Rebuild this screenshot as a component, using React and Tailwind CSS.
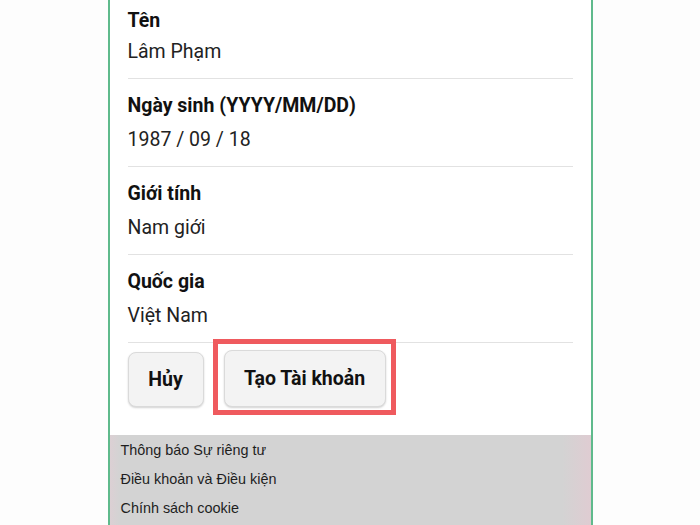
export default function App() {
  const sections = [
    { label: "Ngày sinh (YYYY/MM/DD)", value: "1987 / 09 / 18" },
    { label: "Giới tính", value: "Nam giới" },
    { label: "Quốc gia", value: "Việt Nam" },
  ];
  return (
    <div className="w-[700px] h-[525px] bg-[#fdfdfd] overflow-hidden" style={{ fontFamily: "Roboto, 'Noto Sans', sans-serif" }}>
      <div className="mx-auto w-[485px] h-[525px] border-x-2 border-[#5fba8c] bg-white flex flex-col">
        <div className="px-[18px]">
          <div className="pt-[9px] pb-[14px] border-b border-[#e2e2e2]">
            <div className="text-[19.5px] leading-[24px] font-bold text-[#111]">Tên</div>
            <div className="mt-[7px] text-[19.5px] leading-[24px] text-[#222]">Lâm Phạm</div>
          </div>
          {sections.map((s) => (
            <div key={s.label} className="pt-[15px] pb-[14px] border-b border-[#e2e2e2]">
              <div className="text-[19.5px] leading-[24px] font-bold text-[#111]">{s.label}</div>
              <div className="mt-[10px] text-[19.5px] leading-[24px] text-[#222]">{s.value}</div>
            </div>
          ))}
          <div className="h-[92px] pt-[7px] flex items-start gap-[20px]">
            <button className="mt-[2px] w-[76px] h-[55px] rounded-[8px] bg-[#f3f3f3] border border-[#dadada] shadow-[0_1px_2px_rgba(0,0,0,0.18)] text-[19.5px] font-bold text-[#111]">
              Hủy
            </button>
            <div className="relative">
              <button className="w-[162px] h-[57px] rounded-[8px] bg-[#f3f3f3] border border-[#dadada] shadow-[0_1px_2px_rgba(0,0,0,0.18)] text-[19.5px] font-bold text-[#111]">
                Tạo Tài khoản
              </button>
              <div className="absolute -left-[11px] -top-[11px] -right-[10px] -bottom-[8px] border-[5px] border-[#ef5a5e]"></div>
            </div>
          </div>
        </div>
        <div
          className="flex-1 pt-[1px] pl-[11px] bg-[linear-gradient(to_right,#dcd0d4_0%,#d3d3d3_2%,#d3d3d3_94%,#dfccd2_100%)] text-[14.4px] leading-[29px] text-[#1e1e1e]"
          style={{ fontFamily: "'Liberation Sans', Arial, sans-serif" }}
        >
          <div>Thông báo Sự riêng tư</div>
          <div>Điều khoản và Điều kiện</div>
          <div>Chính sách cookie</div>
        </div>
      </div>
    </div>
  );
}
